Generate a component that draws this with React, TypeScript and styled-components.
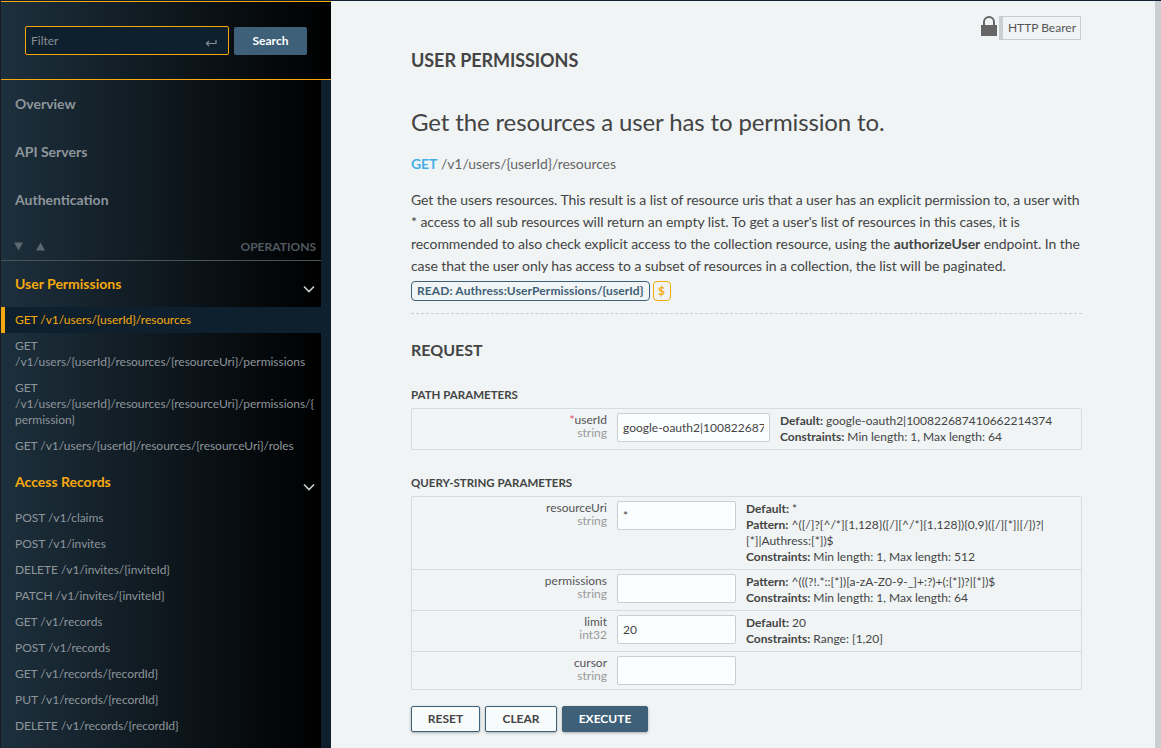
import React from "react";
import styled, { createGlobalStyle } from "styled-components";

const GlobalStyle = createGlobalStyle`
  html, body {
    margin: 0;
    height: 100%;
    overflow: hidden;
    background: #f0f4f5;
    font-family: Lato, "Liberation Sans", sans-serif;
  }
  * { box-sizing: border-box; }
`;

const Page = styled.div`
  display: flex;
  width: 1161px;
  height: 748px;
  overflow: hidden;
`;

const Nav = styled.nav`
  width: 331px;
  flex: none;
  height: 748px;
  display: flex;
  flex-direction: column;
  padding-top: 1px;
  background: #0e202d;
  border-left: 1px solid #161c20;
  overflow: hidden;
`;

const NavHeader = styled.div`
  height: 79px;
  flex: none;
  display: flex;
  align-items: flex-start;
  padding: 24px 24px 0 24px;
  gap: 5px;
  background: linear-gradient(to right, #1d303d, #000);
  border-top: 1px solid #f5a90f;
  border-bottom: 1px solid #f5a90f;
`;

const FilterBox = styled.div`
  width: 204px;
  height: 29px;
  display: flex;
  align-items: center;
  justify-content: space-between;
  padding: 0 11px 0 5px;
  background: #0e202d;
  border: 1px solid #f5a90f;
  border-radius: 2px;
`;

const FilterInput = styled.input`
  flex: 1;
  min-width: 0;
  padding: 0;
  border: 0;
  outline: 0;
  background: transparent;
  color: #ccc;
  font: 12px Lato, sans-serif;
  &::placeholder {
    color: #868e94;
    opacity: 1;
  }
`;

const EnterIcon = styled.svg`
  width: 12px;
  height: 9px;
  margin-top: 6px;
`;

const SearchButton = styled.button`
  width: 73px;
  height: 28px;
  margin-top: 1px;
  padding: 0 0 2px;
  border: 0;
  border-radius: 2px;
  background: #3e6078;
  color: #fff;
  font: 700 12px Lato, sans-serif;
`;

const NavBody = styled.div`
  width: 320px;
  flex: 1;
  background: linear-gradient(to right, #1d303d, #000);
`;

const TopItem = styled.div`
  height: 48px;
  display: flex;
  align-items: center;
  padding: 0 0 2px 14px;
  font-size: 14px;
  font-weight: 700;
  color: #8e959b;
`;

const OpsBar = styled.div`
  height: 37px;
  display: flex;
  align-items: center;
  justify-content: space-between;
  padding: 8px 5px 0 13px;
  border-bottom: 1px solid #4a5358;
  color: #505a60;
  font-size: 12px;
  font-weight: 700;
`;

const Arrows = styled.span`
  display: flex;
  gap: 13px;
`;

const ArrowIcon = styled.svg`
  width: 9px;
  height: 9px;
  fill: #5c686e;
`;

const Tag = styled.div`
  height: 46px;
  display: flex;
  align-items: center;
  justify-content: space-between;
  padding: 0 5px 2px 14px;
  color: #f5a90f;
  font-size: 14px;
  font-weight: 700;
`;

const Chevron = styled.svg`
  width: 14px;
  height: 14px;
  margin-top: 11px;
`;

const OpItem = styled.div<{ $active?: boolean }>`
  padding: 5px 5px 5px ${(p) => (p.$active ? "10px" : "14px")};
  font-size: 12px;
  line-height: 16px;
  letter-spacing: -0.04px;
  overflow-wrap: anywhere;
  color: ${(p) => (p.$active ? "#f5a90f" : "#8e959b")};
  background: ${(p) => (p.$active ? "#0e202d" : "transparent")};
  border-left: ${(p) => (p.$active ? "4px solid #f5a90f" : "0")};
`;

const Main = styled.main`
  flex: 1;
  height: 748px;
  overflow: hidden;
  position: relative;
  padding: 47px 79px 0 80px;
  border-top: 1px solid #12232f;
  color: #444;
`;

const ScrollThumb = styled.div`
  position: absolute;
  top: 0;
  right: 0;
  width: 6px;
  height: 100%;
  background: #c9ced0;
`;

const AuthBadge = styled.div`
  position: absolute;
  top: 15px;
  right: 80px;
  display: flex;
  align-items: flex-start;
`;

const LockIcon = styled.svg`
  width: 16px;
  height: 20px;
  margin-right: 2px;
`;

const BearerLabel = styled.div`
  height: 24px;
  padding: 0 4px 0 5px;
  border: 1px solid #c9ced0;
  border-left-width: 4px;
  font-size: 12px;
  line-height: 22px;
  color: #555;
`;

const TagTitle = styled.h2`
  margin: 0;
  font-size: 18px;
  line-height: 24px;
  font-weight: 700;
  letter-spacing: -0.07px;
  text-transform: uppercase;
  color: #444;
`;

const OpTitle = styled.h1`
  margin: 36px 0 0;
  font-size: 24px;
  line-height: 28px;
  font-weight: 400;
  letter-spacing: -0.13px;
  color: #444;
`;

const Endpoint = styled.div`
  margin-top: 19px;
  font-size: 14px;
  line-height: 18px;
  letter-spacing: -0.07px;
  color: #666;
`;

const Method = styled.span`
  color: #47afe8;
  font-weight: 700;
`;

const Description = styled.p`
  margin: 16px 0 0;
  font-size: 14px;
  line-height: 22px;
  letter-spacing: -0.07px;
  color: #444;
`;

const Scopes = styled.div`
  display: flex;
  gap: 3px;
  margin-top: 4px;
`;

const Scope = styled.span<{ $gold?: boolean }>`
  height: 20px;
  padding: 0 ${(p) => (p.$gold ? "4.5px" : "5px")};
  border-radius: 4px;
  border: 1px solid ${(p) => (p.$gold ? "#f5a90f" : "#3e6078")};
  color: ${(p) => (p.$gold ? "#f5a90f" : "#3e6078")};
  font-size: 12px;
  font-weight: 700;
  line-height: 18px;
  letter-spacing: 0.11px;
`;

const Divider = styled.hr`
  margin: 12px 0 0;
  border: 0;
  border-top: 1px dashed #c9ced0;
`;

const RequestTitle = styled.h3`
  margin: 25px 0 0;
  font-size: 16px;
  line-height: 22px;
  font-weight: 700;
  color: #444;
`;

const TableTitle = styled.div<{ $first?: boolean }>`
  margin-top: ${(p) => (p.$first ? "26px" : "25px")};
  font-size: 11.5px;
  line-height: 16px;
  font-weight: 700;
  color: #444;
`;

const ParamTable = styled.div`
  margin-top: 5px;
  border: 1px solid #d6dbdd;
  border-radius: 2px;
`;

const ParamRow = styled.div<{ $wideInput?: boolean }>`
  display: grid;
  grid-template-columns: 195px ${(p) => (p.$wideInput ? "153px" : "119px")} 1fr;
  column-gap: 10px;
  padding: 4px 0;
  & + & {
    border-top: 1px solid #d6dbdd;
  }
`;

const ParamName = styled.div`
  text-align: right;
  font-size: 12px;
  line-height: 13px;
  color: #555;
`;

const Required = styled.span`
  color: #e0455a;
`;

const ParamType = styled.div`
  color: #999;
`;

const ParamInput = styled.input`
  width: 100%;
  height: 29px;
  padding: 0 5px;
  background: #fbfeff;
  border: 1px solid #c9ced0;
  border-radius: 2px;
  outline: 0;
  font: 12px Lato, sans-serif;
  color: #444;
`;

const ParamInfo = styled.div`
  font-size: 12px;
  line-height: 16px;
  color: #444;
  padding-right: 12px;
  b {
    font-weight: 700;
  }
`;

const Actions = styled.div`
  display: flex;
  gap: 5px;
  margin-top: 16px;
`;

const ActionButton = styled.button<{ $primary?: boolean; $width: number }>`
  width: ${(p) => p.$width}px;
  height: 26px;
  padding: 0 0 1px;
  border-radius: 2px;
  border: 1px solid #3e6078;
  background: ${(p) => (p.$primary ? "#3e6078" : "#f8fbfc")};
  color: ${(p) => (p.$primary ? "#fff" : "#444")};
  font: 700 12px Lato, sans-serif;
  box-shadow: 0 1px 3px rgba(0, 0, 0, 0.3);
`;

const firstGroup = [
  "GET /v1/users/{userId}/resources/{resourceUri}/permissions",
  "GET /v1/users/{userId}/resources/{resourceUri}/permissions/{\u200bpermission}",
  "GET /v1/users/{userId}/resources/{resourceUri}/roles",
];

const accessRecords = [
  "POST /v1/claims",
  "POST /v1/invites",
  "DELETE /v1/invites/{inviteId}",
  "PATCH /v1/invites/{inviteId}",
  "GET /v1/records",
  "POST /v1/records",
  "GET /v1/records/{recordId}",
  "PUT /v1/records/{recordId}",
  "DELETE /v1/records/{recordId}",
];

const ChevronDown = () => (
  <Chevron viewBox="0 0 14 14" fill="none" stroke="#c9ced0" strokeWidth="1.6">
    <path d="M2 4.5 7 9.5 12 4.5" />
  </Chevron>
);

const App: React.FC = () => {
  return (
    <Page>
      <GlobalStyle />
      <Nav>
        <NavHeader>
          <FilterBox>
            <FilterInput placeholder="Filter" />
            <EnterIcon viewBox="0 0 12 9" fill="none" stroke="#868e94" strokeWidth="1.2">
              <path d="M11 1v3.5H1.5M4 2 1.5 4.5 4 7" />
            </EnterIcon>
          </FilterBox>
          <SearchButton>Search</SearchButton>
        </NavHeader>
        <NavBody>
          <TopItem>Overview</TopItem>
          <TopItem>API Servers</TopItem>
          <TopItem>Authentication</TopItem>
          <OpsBar>
            <Arrows>
              <ArrowIcon viewBox="0 0 10 9">
                <path d="M0 0h10L5 9z" />
              </ArrowIcon>
              <ArrowIcon viewBox="0 0 10 9">
                <path d="M0 9h10L5 0z" />
              </ArrowIcon>
            </Arrows>
            <span>OPERATIONS</span>
          </OpsBar>
          <Tag>
            User Permissions
            <ChevronDown />
          </Tag>
          <OpItem $active>GET /v1/users/{"{userId}"}/resources</OpItem>
          {firstGroup.map((op) => (
            <OpItem key={op}>{op}</OpItem>
          ))}
          <Tag>
            Access Records
            <ChevronDown />
          </Tag>
          {accessRecords.map((op) => (
            <OpItem key={op}>{op}</OpItem>
          ))}
        </NavBody>
      </Nav>
      <Main>
        <ScrollThumb />
        <AuthBadge>
          <LockIcon viewBox="0 0 16 20">
            <path d="M0 9h16v11H0z" fill="#666" />
            <path
              d="M3 9V6a5 5 0 0 1 10 0v3"
              fill="none"
              stroke="#666"
              strokeWidth="2"
            />
          </LockIcon>
          <BearerLabel>HTTP Bearer</BearerLabel>
        </AuthBadge>
        <TagTitle>User Permissions</TagTitle>
        <OpTitle>Get the resources a user has to permission to.</OpTitle>
        <Endpoint>
          <Method>GET</Method> /v1/users/{"{userId}"}/resources
        </Endpoint>
        <Description>
          Get the users resources. This result is a list of resource uris that a
          user has an explicit permission to, a user with * access to all sub
          resources will return an empty list. To get a user's list of resources
          in this cases, it is recommended to also check explicit access to the
          collection resource, using the <b>authorizeUser</b> endpoint. In the
          case that the user only has access to a subset of resources in a
          collection, the list will be paginated.
        </Description>
        <Scopes>
          <Scope>READ: Authress:UserPermissions/{"{userId}"}</Scope>
          <Scope $gold>$</Scope>
        </Scopes>
        <Divider />
        <RequestTitle>REQUEST</RequestTitle>
        <TableTitle $first>PATH PARAMETERS</TableTitle>
        <ParamTable>
          <ParamRow $wideInput>
            <ParamName>
              <Required>*</Required>userId
              <ParamType>string</ParamType>
            </ParamName>
            <ParamInput readOnly value="google-oauth2|100822687410662214374" />
            <ParamInfo>
              <b>Default:</b> google-oauth2|100822687410662214374
              <br />
              <b>Constraints:</b> Min length: 1, Max length: 64
            </ParamInfo>
          </ParamRow>
        </ParamTable>
        <TableTitle>QUERY-STRING PARAMETERS</TableTitle>
        <ParamTable>
          <ParamRow>
            <ParamName>
              resourceUri
              <ParamType>string</ParamType>
            </ParamName>
            <ParamInput readOnly value="*" />
            <ParamInfo>
              <b>Default:</b> *
              <br />
              <b>Pattern:</b> ^([/]?[^/*]{"{1,128}"}([/][^/*]{"{1,128}"}){"{0,9}"}([/][*]|[/])?|[*]|Authress:[*])$
              <br />
              <b>Constraints:</b> Min length: 1, Max length: 512
            </ParamInfo>
          </ParamRow>
          <ParamRow>
            <ParamName>
              permissions
              <ParamType>string</ParamType>
            </ParamName>
            <ParamInput readOnly />
            <ParamInfo>
              <b>Pattern:</b> ^(((?!.*::[*])[a-zA-Z0-9-_]+:?)+(:[*])?|[*])$
              <br />
              <b>Constraints:</b> Min length: 1, Max length: 64
            </ParamInfo>
          </ParamRow>
          <ParamRow>
            <ParamName>
              limit
              <ParamType>int32</ParamType>
            </ParamName>
            <ParamInput readOnly value="20" />
            <ParamInfo>
              <b>Default:</b> 20
              <br />
              <b>Constraints:</b> Range: [1,20]
            </ParamInfo>
          </ParamRow>
          <ParamRow>
            <ParamName>
              cursor
              <ParamType>string</ParamType>
            </ParamName>
            <ParamInput readOnly />
            <ParamInfo />
          </ParamRow>
        </ParamTable>
        <Actions>
          <ActionButton $width={69}>RESET</ActionButton>
          <ActionButton $width={72}>CLEAR</ActionButton>
          <ActionButton $primary $width={86}>EXECUTE</ActionButton>
        </Actions>
      </Main>
    </Page>
  );
};

export default App;
